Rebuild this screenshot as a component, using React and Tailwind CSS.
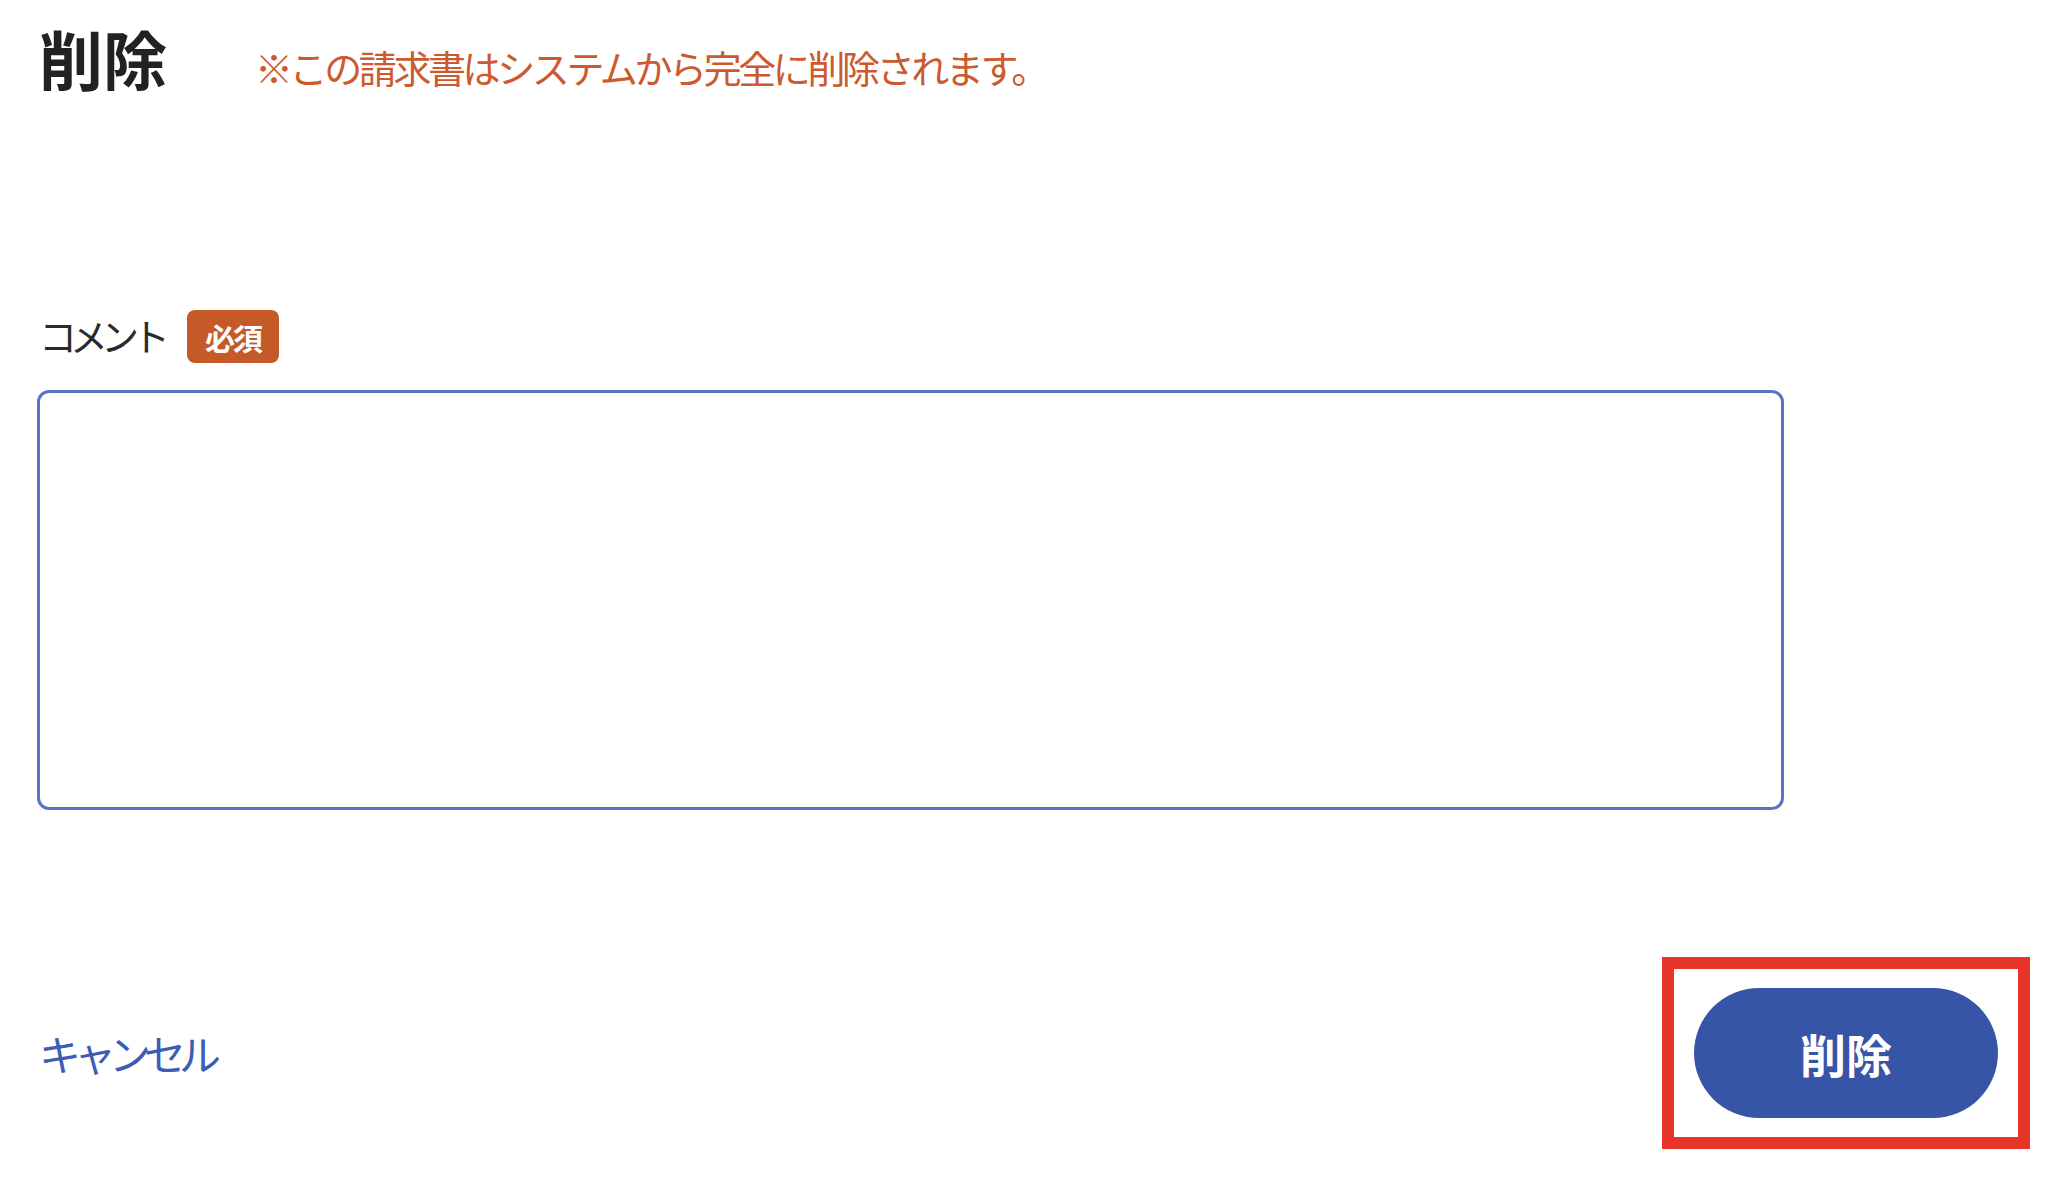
const App = () => {
  return (
    <div className="min-h-screen bg-white pl-[39px] pr-[22px] pt-[25px] font-['Noto_Sans_CJK_JP',sans-serif]">
      {/* Header */}
      <div className="flex items-end">
        <h1 className="text-[64px] font-bold leading-none text-[#222222]">削除</h1>
        <p className="mb-[3px] ml-[88px] text-[38px] leading-none tracking-[-3.4px] text-[#cc5a2e]">
          ※この請求書はシステムから完全に削除されます。
        </p>
      </div>

      {/* Comment label */}
      <div className="mt-[221px] flex items-center gap-[24px]">
        <span className="mb-[4px] text-[38px] leading-none tracking-[-7px] text-[#2a2a2a]">コメント</span>
        <span className="flex h-[53px] w-[92px] items-center justify-center rounded-[8px] bg-[#c55a28] text-[30px] font-bold leading-none tracking-[-2px] text-white">
          必須
        </span>
      </div>

      {/* Textarea */}
      <textarea className="-ml-[2px] mt-[27px] block h-[420px] w-[1747px] resize-none rounded-[12px] border-[3px] border-[#5b73c2] outline-none" />

      {/* Actions */}
      <div className="mt-[147px] flex items-center justify-between">
        <button className="text-[42px] leading-none tracking-[-7px] text-[#3d5cb3]">キャンセル</button>
        <div className="border-[12px] border-[#e5342a] px-[20px] py-[19px]">
          <button className="h-[130px] w-[304px] rounded-full bg-[#3755a6] text-[46px] font-bold leading-none text-white">
            削除
          </button>
        </div>
      </div>
    </div>
  );
};

export default App;
